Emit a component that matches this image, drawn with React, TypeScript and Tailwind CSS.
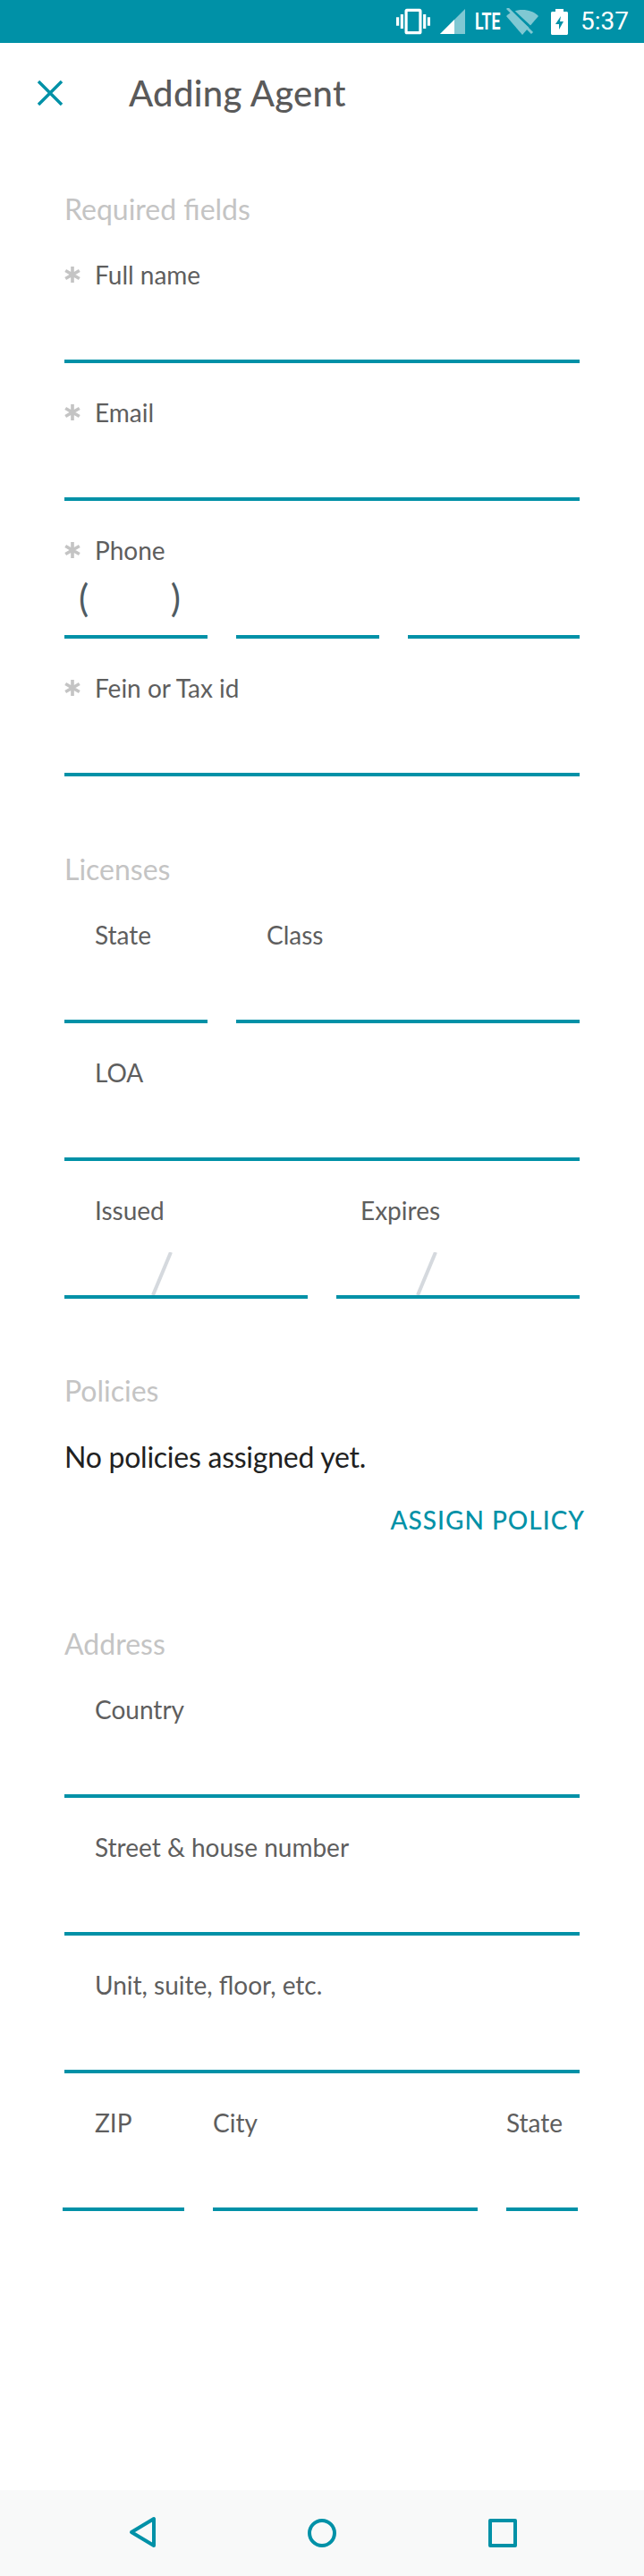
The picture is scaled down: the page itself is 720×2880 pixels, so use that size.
import type { ReactNode } from 'react';

const LATO = "font-['Lato','Liberation_Sans',sans-serif]";

function StatusBar() {
  return (
    <div className="flex h-[48px] items-center bg-[#0091a7] pl-[443px]">
      {/* vibrate */}
      <svg width="38" height="38" viewBox="0 0 24 24" fill="#fff" className="mr-[11px]">
        <path d="M0 15h2V9H0v6zm3 2h2V7H3v10zm19-8v6h2V9h-2zm-3 8h2V7h-2v10zM16.5 3h-9C6.67 3 6 3.67 6 4.5v15c0 .83.67 1.5 1.5 1.5h9c.83 0 1.5-.67 1.5-1.5v-15c0-.83-.67-1.5-1.5-1.5zM16 19H8V5h8v14z" />
      </svg>
      {/* signal */}
      <svg width="28" height="28" viewBox="0 0 28 28" className="mr-[11px]">
        <path d="M0 28 28 0v28z" fill="#80c8d3" />
        <path d="M0 28 16 12v16z" fill="#fff" />
      </svg>
      <span className="mr-[8px] w-[27px] origin-left scale-x-[0.68] font-['Roboto',sans-serif] text-[26px] leading-[28px] font-bold whitespace-nowrap text-white">
        LTE
      </span>
      {/* wifi off */}
      <svg width="36" height="30" viewBox="0 0 36 30" className="mr-[14px]">
        <path d="M0 9C5 4 11 2 18 2s13 2 18 7L18 30z" fill="#80c8d3" />
        <path d="M3-1 33 27" stroke="#0091a7" strokeWidth="3" />
        <path d="M1 0 29 28" stroke="#80c8d3" strokeWidth="3" />
      </svg>
      {/* battery charging */}
      <svg width="19" height="29" viewBox="0 0 19 29" className="mr-[14px]">
        <path d="M5 0h9v3h3.500c.8 0 1.500.7 1.500 1.500v23c0 .8-.7 1.500-1.500 1.500h-16C.7 29 0 28.300 0 27.500v-23C0 3.700.7 3 1.500 3H5z" fill="#fff" />
        <path d="M11 8 5 17h4v6l5-9h-4z" fill="#0091a7" />
      </svg>
      <span className="font-['Roboto',sans-serif] text-[28px] leading-[48px] font-normal text-white">5:37</span>
    </div>
  );
}

function Toolbar() {
  return (
    <div className="flex h-[112px] items-center pl-[42px]">
      <svg width="28" height="28" viewBox="0 0 28 28" fill="none" stroke="#0091a7" strokeWidth="3.500">
        <path d="M1 1l26 26M27 1 1 27" />
      </svg>
      <h1 className="ml-[74px] text-[40px] leading-[48px] font-medium tracking-[0.3px] text-[#5a5a5a]">Adding Agent</h1>
    </div>
  );
}

function SectionTitle({ children }: { children: ReactNode }) {
  return <h2 className="h-[34px] text-[32px] leading-[32px] text-[#c4c4c4]">{children}</h2>;
}

function RequiredMark() {
  return (
    <svg width="18" height="18" viewBox="0 0 18 18" stroke="#c4c4c4" strokeWidth="3.600" className="absolute top-[8px] left-0">
      <path d="M9 0v18M1.200 4.500l15.600 9M16.800 4.500l-15.600 9" />
    </svg>
  );
}

interface FieldProps {
  label: string;
  required?: boolean;
  children?: ReactNode;
}

// label + empty input box + the teal underline, 154px a row
function Field({ label, required, children }: FieldProps) {
  return (
    <div className="flex h-[154px] flex-col pt-[38px]">
      <div className="relative h-[34px] pl-[34px] text-[28px] leading-[34px] whitespace-nowrap text-[#5e5e5e]">
        {required && <RequiredMark />}
        {label}
      </div>
      <div className="h-[78px]">{children}</div>
      <div className="h-[4px] bg-[#0091a7]" />
    </div>
  );
}

function PhoneParens() {
  return (
    <div className="flex h-[78px] w-[130px] items-start justify-between pl-[16px] pt-[8px] text-[42px] leading-[56px] font-normal text-[#4f5b62]">
      <span>(</span>
      <span>)</span>
    </div>
  );
}

function DateSlash() {
  return (
    <svg width="24" height="48" viewBox="0 0 24 48" className="mt-[30px]">
      <path d="M2 48 22 0" stroke="#d5d9de" strokeWidth="4" fill="none" />
    </svg>
  );
}

function NavBar() {
  return (
    <div className="flex h-[96px] items-center gap-[168px] bg-[#f8f9f9] pl-[144px]">
      <svg width="32" height="36" viewBox="0 0 32 36" fill="none" stroke="#0091a7" strokeWidth="4" strokeLinejoin="round" className="-mt-[2px]">
        <path d="M28 3v30L3 18z" />
      </svg>
      <svg width="32" height="32" viewBox="0 0 32 32" fill="none" stroke="#0091a7" strokeWidth="4">
        <circle cx="16" cy="16" r="14" />
      </svg>
      <svg width="32" height="32" viewBox="0 0 32 32" fill="none" stroke="#0091a7" strokeWidth="4" strokeLinejoin="round" className="ml-[2px]">
        <rect x="2" y="2" width="28" height="28" />
      </svg>
    </div>
  );
}

export default function App() {
  return (
    <div className={`flex h-[2880px] w-[720px] flex-col bg-white ${LATO}`}>
      <StatusBar />
      <Toolbar />

      <main className="flex-1 px-[72px] pt-[58px]">
        <SectionTitle>Required fields</SectionTitle>
        <Field label="Full name" required />
        <Field label="Email" required />
        <div className="flex gap-[32px]">
          <div className="w-[160px]">
            <Field label="Phone" required>
              <PhoneParens />
            </Field>
          </div>
          <div className="w-[160px]">
            <Field label="" />
          </div>
          <div className="flex-1">
            <Field label="" />
          </div>
        </div>
        <Field label="Fein or Tax id" required />

        <div className="mt-[88px]">
          <SectionTitle>Licenses</SectionTitle>
        </div>
        <div className="flex gap-[32px]">
          <div className="w-[160px]">
            <Field label="State" />
          </div>
          <div className="flex-1">
            <Field label="Class" />
          </div>
        </div>
        <Field label="LOA" />
        <div className="flex gap-[32px]">
          <div className="flex-1">
            <Field label="Issued">
              <div className="pl-[97px]">
                <DateSlash />
              </div>
            </Field>
          </div>
          <div className="flex-1 [&>div>div:first-child]:pl-[27px]">
            <Field label="Expires">
              <div className="pl-[89px]">
                <DateSlash />
              </div>
            </Field>
          </div>
        </div>

        <div className="mt-[87px]">
          <SectionTitle>Policies</SectionTitle>
        </div>
        <p className="mt-[36px] text-[32px] leading-[40px] tracking-[-0.25px] text-[#212121]">No policies assigned yet.</p>
        <div className="mt-[33px] -mr-[6px] text-right text-[28px] leading-[34px] font-medium tracking-[1px] text-[#0091a7]">
          ASSIGN POLICY
        </div>

        <div className="mt-[106px]">
          <SectionTitle>Address</SectionTitle>
        </div>
        <Field label="Country" />
        <Field label="Street & house number" />
        <Field label="Unit, suite, floor, etc." />
        <div className="-mx-[2px] flex gap-[32px]">
          <div className="w-[136px] [&>div>div:first-child]:pl-[36px]">
            <Field label="ZIP" />
          </div>
          <div className="w-[296px] [&>div>div:first-child]:pl-0">
            <Field label="City" />
          </div>
          <div className="w-[80px] [&>div>div:first-child]:pl-0">
            <Field label="State" />
          </div>
        </div>
      </main>

      <NavBar />
    </div>
  );
}
